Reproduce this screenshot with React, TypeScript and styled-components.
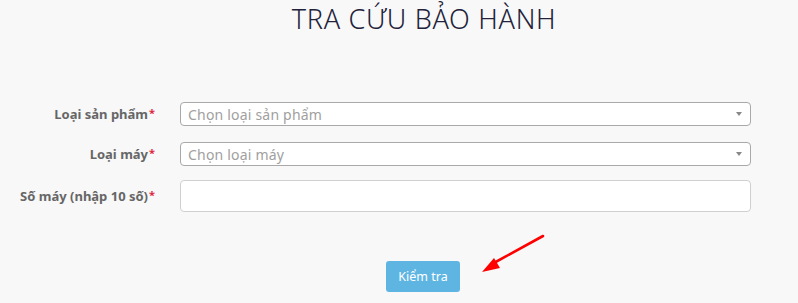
import styled, { createGlobalStyle } from "styled-components";

const GlobalStyle = createGlobalStyle`
  html, body {
    margin: 0;
    padding: 0;
    background: #f8f8f8;
  }
  body {
    font-family: "Noto Sans", "Lato", sans-serif;
    color: #666;
  }
`;

const Page = styled.div`
  position: relative;
  width: 798px;
  height: 303px;
  overflow: hidden;
`;

const Title = styled.h1`
  margin: 0;
  padding-top: 2px;
  padding-left: 50px;
  text-align: center;
  font-family: "Noto Sans", "Lato", sans-serif;
  font-weight: 300;
  font-size: 27px;
  letter-spacing: 0.7px;
  line-height: 34px;
  color: #22223a;
`;

const Form = styled.form`
  display: flex;
  flex-direction: column;
  margin-top: 65px;
`;

const Row = styled.div<{ $height: number; $mb: number }>`
  display: grid;
  grid-template-columns: 155px 571px;
  column-gap: 25px;
  align-items: center;
  height: ${(p) => p.$height}px;
  margin-bottom: ${(p) => p.$mb}px;
`;

const Label = styled.label`
  text-align: right;
  font-weight: 700;
  font-size: 13px;
  color: #666;
  white-space: nowrap;
`;

const Req = styled.span`
  color: #e0263c;
  font-size: 11px;
  margin-left: 1px;
  vertical-align: 2px;
`;

const Select = styled.div`
  display: flex;
  align-items: center;
  justify-content: space-between;
  box-sizing: border-box;
  height: 24px;
  padding: 0 8px 0 7px;
  background: #fff;
  border: 1px solid #a9a9a9;
  border-radius: 4px;
  font-size: 14px;
  letter-spacing: 0.2px;
  color: #a0a0a0;
`;

const Caret = styled.span`
  width: 0;
  height: 0;
  border-left: 3px solid transparent;
  border-right: 3px solid transparent;
  border-top: 4px solid #888;
`;

const Input = styled.input`
  box-sizing: border-box;
  height: 32px;
  width: 100%;
  background: #fff;
  border: 1px solid #d0d0d0;
  border-radius: 4px;
  outline: none;
`;

const Actions = styled.div`
  display: flex;
  justify-content: center;
  margin-top: 49px;
`;

const Button = styled.button`
  width: 74px;
  height: 31px;
  margin-left: 48px;
  border: none;
  border-radius: 3px;
  background: #5fb5e2;
  color: #fff;
  font-family: "Noto Sans", "Lato", sans-serif;
  font-size: 12.5px;
  cursor: pointer;
`;

const Arrow = styled.svg`
  position: absolute;
  left: 476px;
  top: 230px;
`;

export default function App() {
  return (
    <Page>
      <GlobalStyle />
      <Title>TRA CỨU BẢO HÀNH</Title>
      <Form>
        <Row $height={26} $mb={14}>
          <Label>
            Loại sản phẩm<Req>*</Req>
          </Label>
          <Select>
            Chọn loại sản phẩm
            <Caret />
          </Select>
        </Row>
        <Row $height={26} $mb={13}>
          <Label>
            Loại máy<Req>*</Req>
          </Label>
          <Select>
            Chọn loại máy
            <Caret />
          </Select>
        </Row>
        <Row $height={32} $mb={0}>
          <Label>
            Số máy (nhập 10 số)<Req>*</Req>
          </Label>
          <Input type="text" />
        </Row>
        <Actions>
          <Button type="button">Kiểm tra</Button>
        </Actions>
      </Form>
      <Arrow width="72" height="46" viewBox="0 0 72 46">
        <line x1="67" y1="6" x2="16" y2="34" stroke="#f00" strokeWidth="2.6" strokeLinecap="round" />
        <polygon points="6,42 18,28 24,38" fill="#f00" />
      </Arrow>
    </Page>
  );
}
